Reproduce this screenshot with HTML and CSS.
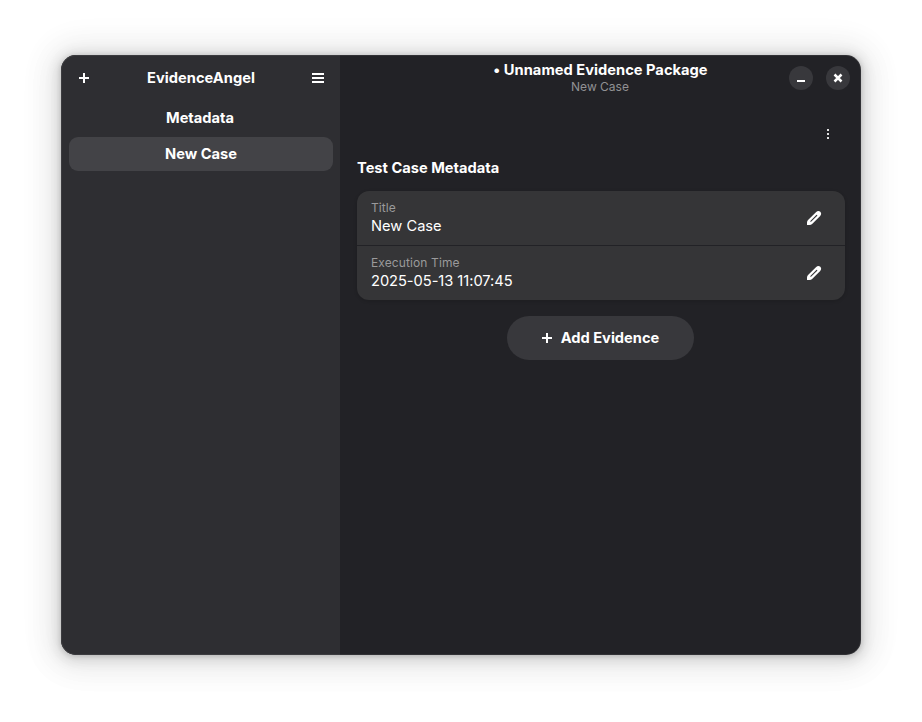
FILE: index.html
```html
<!DOCTYPE html>
<html lang="en">
<head>
<meta charset="utf-8">
<title>EvidenceAngel</title>
<link rel="stylesheet" href="styles.css">
</head>
<body>
<svg width="0" height="0" class="defs">
  <symbol id="plus" viewBox="0 0 16 16"><path d="M7 3h2v4h4v2H9v4H7V9H3V7h4z"/></symbol>
  <symbol id="pencil" viewBox="0 0 16 16"><path fill-rule="evenodd" d="M10.200 1.900c1.300-1.300 3-1.200 4.100-.1s1.200 2.800-.1 4.100L6.400 13.700Q5.100 15 3.400 15H1v-2.400q0-1.700 1.300-2.900zM10.300 5.100 4.600 10.800q-.6.600-.2.900t.9-.1l5.700-5.700q.6-.6.200-.9t-.9.100z"/></symbol>
</svg>
<div class="window">
  <aside class="sidebar">
    <header class="bar">
      <button class="flat"><svg class="icon"><use href="#plus"/></svg></button>
      <h1>EvidenceAngel</h1>
      <button class="flat"><svg class="icon" viewBox="0 0 16 16"><path d="M2 3h12v2H2zM2 7h12v2H2zM2 11h12v2H2z"/></svg></button>
    </header>
    <nav>
      <a class="item first">Metadata</a>
      <a class="item selected">New Case</a>
    </nav>
  </aside>
  <main class="content">
    <header class="titlebar">
      <div class="titles">
        <div class="title">• Unnamed Evidence Package</div>
        <div class="subtitle">New Case</div>
      </div>
      <div class="controls">
        <button class="round"><svg class="icon" viewBox="0 0 16 16"><path d="M4 10h8v2H4z"/></svg></button>
        <button class="round"><svg class="icon" viewBox="0 0 16 16"><path class="stroke" d="M4.500 4.500l7 7M11.500 4.500l-7 7"/></svg></button>
      </div>
    </header>
    <div class="tools">
      <button class="flat more"><svg class="icon" viewBox="0 0 16 16"><path d="M7 3h2v2H7zM7 7h2v2H7zM7 11h2v2H7z"/></svg></button>
    </div>
    <h2>Test Case Metadata</h2>
    <section class="card">
      <div class="row">
        <div><div class="label">Title</div><div class="value">New Case</div></div>
        <svg class="icon"><use href="#pencil"/></svg>
      </div>
      <div class="row">
        <div><div class="label wide">Execution Time</div><div class="value date">2025-05-13 11:07:45</div></div>
        <svg class="icon"><use href="#pencil"/></svg>
      </div>
    </section>
    <button class="add"><svg class="icon"><use href="#plus"/></svg><span>Add Evidence</span></button>
  </main>
</div>
</body>
</html>
```
FILE: styles.css
```css
* { box-sizing: border-box; }
body {
  margin: 0;
  padding: 55px 61px 67px;
  height: 722px;
  background: #fff;
  color: #fff;
  font: 14.667px/18px Inter, sans-serif;
  overflow: hidden;
}
.defs { display: none; }
h1, h2 { margin: 0; font-size: 14.667px; font-weight: 700; line-height: 18px; }
button { border: 0; padding: 0; color: inherit; font: inherit; background: none; display: flex; align-items: center; justify-content: center; }
.icon { width: 16px; height: 16px; fill: currentColor; display: block; flex: none; }
.stroke { fill: none; stroke: currentColor; stroke-width: 2.500; }
.window {
  position: relative;
  display: flex;
  width: 800px;
  height: 600px;
  border-radius: 15px;
  background: #222226;
  box-shadow: 0 1px 4px 1px rgba(0,0,0,.13), 0 2px 12px 5px rgba(0,0,0,.09), 0 3px 28px 13px rgba(0,0,0,.06), 0 0 36px 16px rgba(0,0,0,.03);
}
.window::after {
  content: "";
  position: absolute;
  inset: 0;
  border-radius: inherit;
  box-shadow: inset 0 0 0 1px rgba(255,255,255,.07);
  pointer-events: none;
}
.sidebar { width: 279px; background: #2e2e32; border-radius: 15px 0 0 15px; }
.bar { height: 46px; padding: 0 5px 0 6px; display: flex; align-items: center; justify-content: space-between; }
h1 { letter-spacing: .03px; }
.flat { width: 34px; height: 34px; }
nav { padding: 0 7px 0 8px; display: grid; gap: 2px; }
.item { height: 34px; line-height: 34px; text-align: center; font-weight: 700; border-radius: 9px; }
.first { padding-right: 2px; }
.selected { background: #434347; }
.content { width: 521px; padding: 0 16px 0 17px; display: flex; flex-direction: column; }
.titlebar { height: 46px; margin: 0 -16px 0 -17px; display: grid; grid-template-columns: 1fr auto 1fr; align-items: center; padding: 0 11px 2px; }
.titles { grid-column: 2; text-align: center; }
.title { font-weight: 700; line-height: 18px; letter-spacing: .02px; }
.subtitle { font-size: 12px; line-height: 15px; color: #919193; padding-right: 1px; }
.controls { grid-column: 3; display: flex; justify-content: flex-end; gap: 13px; padding-top: 2px; }
.round { width: 24px; height: 24px; border-radius: 50%; background: #38383c; }
.tools { display: flex; justify-content: flex-end; height: 34px; margin-top: 16px; }
.more { color: #e0e0e0; }
h2 { margin: 8px 0 14px; }
.card { border-radius: 12px; background: #353537; box-shadow: 0 1px 3px 1px rgba(0,0,0,.1); }
.row { height: 54px; display: flex; align-items: center; justify-content: space-between; padding: 0 23px 0 14px; }
.row + .row { height: 55px; border-top: 1px solid #222226; }
.label { font-size: 12px; line-height: 16px; color: #9a9a9b; letter-spacing: .07px; }
.wide { letter-spacing: .11px; }
.value { line-height: 20px; }
.date { letter-spacing: -.04px; }
.add { align-self: center; width: 187px; height: 44px; margin: 16px 1px 0 0; border-radius: 22px; background: #38383c; font-weight: 700; gap: 6px; padding-right: 3px; }
```
